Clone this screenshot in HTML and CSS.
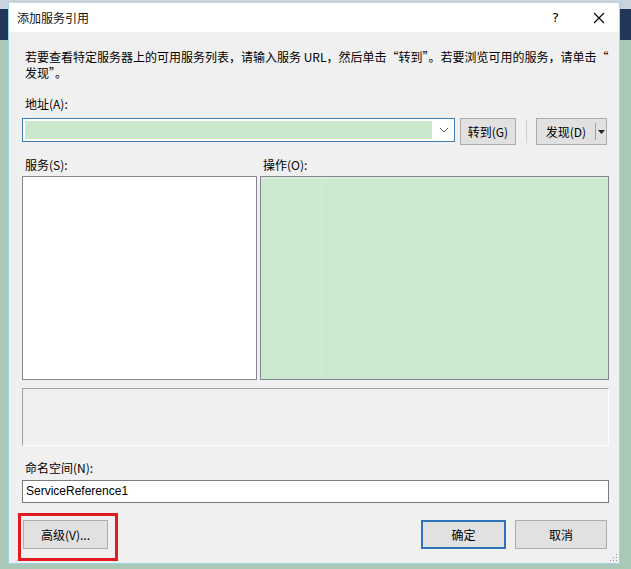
FILE: index.html
```html
<!DOCTYPE html>
<html lang="zh-CN">
<head>
  <meta charset="UTF-8">
  <title>添加服务引用</title>
  <link rel="stylesheet" href="styles.css">
</head>
<body>

  <div class="dialog">
    <div class="titlebar">
      <span class="title">添加服务引用</span>
      <span class="help">?</span>
      <svg class="close" width="12" height="12" viewBox="0 0 12 12">
        <path d="M1 1 L11 11 M11 1 L1 11" stroke="#000" stroke-width="1.1" fill="none"/>
      </svg>
    </div>

    <div class="content">
      <p class="desc">若要查看特定服务器上的可用服务列表，请输入服务 URL，然后单击“转到”。若要浏览可用的服务，请单击“<br>发现”。</p>

      <label class="lbl">地址(A):</label>
      <div class="addr-row">
        <div class="combo">
          <div class="combo-fill"></div>
          <svg class="combo-arrow" width="10" height="6" viewBox="0 0 10 6">
            <path d="M1 1 L5 5 L9 1" stroke="#555" stroke-width="1" fill="none"/>
          </svg>
        </div>
        <button class="btn go">转到(G)</button>
        <div class="sep"></div>
        <div class="btn split">
          <span class="split-main">发现(D)</span>
          <span class="split-arrow">
            <svg width="7" height="4" viewBox="0 0 7 4"><path d="M0 0 L7 0 L3.5 4 Z" fill="#222"/></svg>
          </span>
        </div>
      </div>

      <div class="lists">
        <div class="col services-col">
          <label class="lbl">服务(S):</label>
          <div class="list services"></div>
        </div>
        <div class="col ops-col">
          <label class="lbl">操作(O):</label>
          <div class="list ops">
            <div class="ops-left"></div>
          </div>
        </div>
      </div>

      <div class="status"></div>

      <label class="lbl ns-lbl">命名空间(N):</label>
      <div class="textbox">ServiceReference1</div>

      <div class="footer">
        <div class="highlight">
          <button class="btn adv">高级(V)...</button>
        </div>
        <div class="spacer"></div>
        <button class="btn ok">确定</button>
        <button class="btn cancel">取消</button>
      </div>
    </div>

    <svg class="grip" width="10" height="10" viewBox="0 0 10 10">
      <rect x="8" y="2" width="1" height="1" fill="#999"/>
      <rect x="5" y="5" width="1" height="1" fill="#999"/>
      <rect x="8" y="5" width="1" height="1" fill="#999"/>
      <rect x="2" y="8" width="1" height="1" fill="#999"/>
      <rect x="5" y="8" width="1" height="1" fill="#999"/>
      <rect x="8" y="8" width="1" height="1" fill="#999"/>
    </svg>
  </div>

</body>
</html>
```

FILE: styles.css
```css
body {
  margin: 0;
  width: 631px;
  height: 569px;
  overflow: hidden;
  font-family: "Noto Sans CJK SC", "Liberation Sans", sans-serif;
  font-size: 12px;
  color: #000;
  background: linear-gradient(to bottom, #c9d3dc 0, #c9d3dc 9px, #23375a 9px, #23375a 40px, #a9c8b6 40px);
}

.dialog {
  position: relative;
  margin: 3px 0 0 8px;
  width: 612px;
  height: 561px;
  background-color: #f0f0f0;
  border: 1px solid #9fd3e6;
  border-top: none;
  box-sizing: border-box;
}

.titlebar {
  height: 29px;
  background-color: #fff;
  display: flex;
  align-items: center;
  padding: 0 0 0 8px;
}

.title {
  flex: 1;
  font-size: 12px;
  color: #111;
}

.help {
  font-family: "DejaVu Sans", sans-serif;
  font-size: 13px;
  margin-right: 34px;
}

.close {
  margin-right: 14px;
}

.content {
  padding: 0 12px 0 13px;
}

.desc {
  margin: 17px 0 0 3px;
  line-height: 16px;
  white-space: nowrap;
}

.lbl {
  display: block;
  line-height: 16px;
  padding-left: 3px;
}

.desc + .lbl {
  margin-top: 15px;
}

.addr-row {
  display: flex;
  align-items: flex-start;
  margin-top: 6px;
  height: 28px;
}

.combo {
  width: 433px;
  height: 24px;
  box-sizing: border-box;
  border: 1px solid #3d7fb3;
  background-color: #fff;
  display: flex;
  align-items: center;
  padding: 2px;
}

.combo-fill {
  flex: 1;
  height: 18px;
  background-color: #cbe8cd;
}

.combo-arrow {
  margin: 0 3px 0 7px;
}

.btn {
  font-family: "Noto Sans CJK SC", "Liberation Sans", sans-serif;
  font-size: 12px;
  color: #000;
  background-color: #e1e1e1;
  border: 1px solid #adadad;
  box-sizing: border-box;
  padding: 0;
  display: flex;
  align-items: center;
  justify-content: center;
}

.go {
  margin-left: 5px;
  width: 56px;
  height: 27px;
}

.sep {
  width: 1px;
  height: 23px;
  margin: 2px 9px 0 10px;
  background-color: #cfcfcf;
}

.split {
  width: 71px;
  height: 27px;
  justify-content: flex-start;
}

.split-main {
  width: 58px;
  text-align: center;
  border-right: 1px solid #a0a0a0;
  line-height: 17px;
}

.split-arrow {
  flex: 1;
  display: flex;
  justify-content: center;
}

.lists {
  display: flex;
  margin-top: 11px;
  gap: 3px;
}

.col .lbl {
  margin-bottom: 3px;
}

.list {
  height: 204px;
  box-sizing: border-box;
  border: 1px solid #828790;
}

.services {
  width: 235px;
  background-color: #fff;
}

.ops {
  width: 349px;
  background-color: #cce9cf;
  box-shadow: inset 0 2px 0 #d7eed9, inset 0 5px 0 #cce9cf, inset 0 6px 0 #d3ecd5;
}

.ops-left {
  width: 60px;
  height: 100%;
  border-right: 1px solid #d4edd6;
}

.status {
  margin-top: 8px;
  height: 58px;
  width: 587px;
  box-sizing: border-box;
  border-top: 1px solid #a0a0a0;
  border-left: 1px solid #a0a0a0;
  border-right: 1px solid #fff;
  border-bottom: 1px solid #fff;
}

.ns-lbl {
  margin-top: 14px;
}

.textbox {
  margin-top: 4px;
  width: 587px;
  height: 23px;
  box-sizing: border-box;
  border: 1px solid #7a7a7a;
  background-color: #fff;
  font-family: "Liberation Sans", "Noto Sans CJK SC", sans-serif;
  font-size: 12px;
  line-height: 21px;
  padding-left: 3px;
}

.footer {
  display: flex;
  align-items: flex-start;
  margin-top: 10px;
}

.highlight {
  margin-left: -4px;
  padding: 4px 7px 9px 2px;
  border: 3px solid #e21a22;
}

.adv {
  width: 85px;
  height: 29px;
}

.spacer {
  flex: 1;
}

.ok {
  margin-top: 7px;
  width: 85px;
  height: 29px;
  border: 2px solid #2f72b8;
}

.cancel {
  margin-top: 7px;
  margin-left: 9px;
  width: 92px;
  height: 29px;
}

.grip {
  position: absolute;
  right: 1px;
  bottom: 1px;
}
```
